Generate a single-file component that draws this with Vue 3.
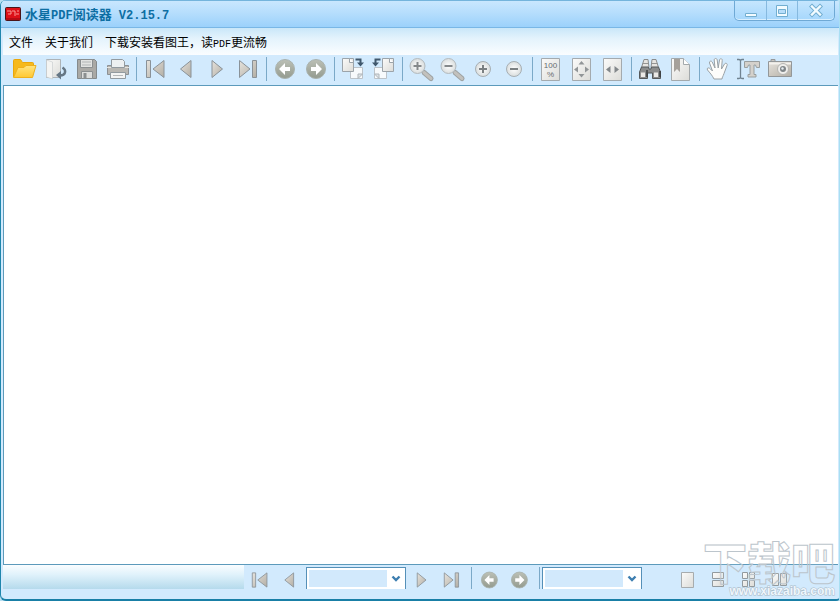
<script setup>
import { ref } from 'vue'

const page = ref('')
const zoom = ref('')

const first = '<path d="M7.500 5.500h4v17h-4zM25 5.500v17L14 14z" fill="url(#metal)" stroke="#8a9298"/>'
const prev = '<path d="M21 5.500v17L10.500 14z" fill="url(#metal)" stroke="#8a9298"/>'
const next = '<path d="M11 5.500v17L21.500 14z" fill="url(#metal)" stroke="#8a9298"/>'
const last = '<path d="M7.500 5.500v17L18 14zM20.500 5.500h4v17h-4z" fill="url(#metal)" stroke="#8a9298"/>'
const back = '<circle cx="16" cy="14" r="9.500" fill="url(#olive)" stroke="#a9b2ae"/><path d="M10 14l6-6v4h5v4h-5v4z" fill="#fff"/>'
const forward = '<circle cx="16" cy="14" r="9.500" fill="url(#olive)" stroke="#a9b2ae"/><path d="M22 14l-6-6v4h-5v4h5v4z" fill="#fff"/>'

const groups = [
  [
    ['打开', '<path d="M4.500 22V5.500q0-1 1-1h6l2 3h10q1 0 1 1V13" fill="#f6b91c" stroke="#e9a70c"/><path d="M4.500 22.500L9 12.500h6l2-2h10L23.500 22.500z" fill="url(#gold)" stroke="#eeb01d"/>'],
    ['导出', '<path d="M6.500 4.500h14v18h-14z" fill="url(#paper)" stroke="#adb3b7"/><path d="M6.500 5l6 2v17l-6-2z" fill="#f4f4f2" stroke="#c5c9cb" stroke-width=".6"/><path d="M22.500 12.500c4.500 3 3 8-2.500 8" fill="none" stroke="#667785" stroke-width="2.400"/><path d="M21 16v8.500l-5-4.500z" fill="#667785"/>'],
    ['保存', '<path d="M6.500 4.500h17l2 2v17h-19z" fill="#aaa9a5" stroke="#858a8c"/><path d="M9.500 4.500h12v8h-12z" fill="#e2e3e1" stroke="#8b8f90"/><path d="M11 7h9M11 10h9" stroke="#b2b5b5"/><path d="M10.500 16.500h11v7h-11z" fill="#dcdddb" stroke="#8b8f90"/><path d="M12.500 18h3v5h-3z" fill="#8b8f90"/>'],
    ['打印', '<path d="M5.500 10.500h21v9h-21z" fill="#b9b7b2" stroke="#8d9194"/><path d="M5 12.500h22" stroke="#e6e4df"/><path d="M9.500 4.500h11l2 2v6h-13z" fill="#edf0f1" stroke="#929a9f"/><path d="M8.500 17.500h15v6h-15z" fill="#f3f3f2" stroke="#929a9f"/><path d="M11 20.500h10" stroke="#b4b7b8"/>'],
  ],
  [['首页', first], ['上一页', prev], ['下一页', next], ['末页', last]],
  [['后退', back], ['前进', forward]],
  [
    ['向右旋转', '<path d="M13.500 12.500h12v11h-12z" fill="#f7fafc" stroke="#bcc3c9"/><path d="M21 23.500l4.500-4.500h-4.500z" fill="#dfe4e8" stroke="#aeb5ba"/><path d="M5.500 3.500h11v13h-11z" fill="url(#paper)" stroke="#9ca4aa"/><path d="M12.500 3.500v4h4" fill="#fff" stroke="#9ca4aa"/><path d="M18.500 4.500h5v4" fill="none" stroke="#40586d" stroke-width="2"/><path d="M20 7.500h7l-3.500 4z" fill="#40586d"/>'],
    ['向左旋转', '<path d="M6.500 12.500h12v11h-12z" fill="#f7fafc" stroke="#bcc3c9"/><path d="M11 23.500L6.500 19H11z" fill="#dfe4e8" stroke="#aeb5ba"/><path d="M14.500 3.500h11v13h-11z" fill="url(#paper)" stroke="#9ca4aa"/><path d="M21.500 3.500v4h4" fill="#fff" stroke="#9ca4aa"/><path d="M12.500 4.500h-5v4" fill="none" stroke="#40586d" stroke-width="2"/><path d="M4 7.500h7l-3.500 4z" fill="#40586d"/>'],
  ],
  [
    ['放大镜', '<path d="M19 17.500l7 6" stroke="#9ea2a3" stroke-width="5" stroke-linecap="round"/><path d="M19 17.500l7 6" stroke="#c2c1bd" stroke-width="3" stroke-linecap="round"/><circle cx="12.500" cy="11" r="7.500" fill="url(#lens)" stroke="#b3babe"/><path d="M8.500 11h8M12.500 7v8" stroke="#85898b" stroke-width="2"/>'],
    ['缩小镜', '<path d="M19 17.500l7 6" stroke="#9ea2a3" stroke-width="5" stroke-linecap="round"/><path d="M19 17.500l7 6" stroke="#c2c1bd" stroke-width="3" stroke-linecap="round"/><circle cx="12.500" cy="11" r="7.500" fill="url(#lens)" stroke="#b3babe"/><path d="M8.500 11h8" stroke="#85898b" stroke-width="2"/>'],
    ['放大', '<circle cx="16" cy="14" r="7.500" fill="url(#lens)" stroke="#a7afb4"/><path d="M12 14h8M16 10v8" stroke="#7b8082" stroke-width="2"/>'],
    ['缩小', '<circle cx="16" cy="14" r="7.500" fill="url(#lens)" stroke="#a7afb4"/><path d="M12 14h8" stroke="#7b8082" stroke-width="2"/>'],
  ],
  [
    ['实际大小', '<path d="M6.500 3.500h18v22h-18z" fill="url(#paper)" stroke="#a4aaae"/><text x="15.500" y="13" text-anchor="middle" font-family="Liberation Sans, sans-serif" font-size="8" fill="#666c70">100</text><text x="15.500" y="22" text-anchor="middle" font-family="Liberation Sans, sans-serif" font-size="8" fill="#666c70">%</text>'],
    ['适合页面', '<path d="M6.500 3.500h18v22h-18z" fill="url(#paper)" stroke="#a4aaae"/><path d="M15.500 6l3 3.500h-6zM15.500 22.500l3-3.500h-6zM8 14.500l4-3v6zM23 14.500l-4-3v6z" fill="#929698"/>'],
    ['适合宽度', '<path d="M6.500 3.500h18v22h-18z" fill="url(#paper)" stroke="#a4aaae"/><path d="M9 14.500l4.500-3.500v7zM22 14.500L17.500 11v7z" fill="#83888b"/>'],
  ],
  [
    ['查找', '<path d="M10 4.500h4l1 8H7.500zM18 4.500h4l2.500 8H17z" fill="#e6e4e1" stroke="#8b8c8c"/><path d="M8.500 8.500h6M17.500 8.500h6" stroke="#949594"/><path d="M7.500 12h7l.5 2h2l.5-2h7l2 5v6.500h-8V18h-5v5.500h-8V17z" fill="#8b8c8c" stroke="#55585a"/><path d="M7 17.500h4v4.500H7zM20 17.500h4v4.500h-4z" fill="#ebe9e6"/><path d="M13 15v7M26 16v6" stroke="#3a3c3e" stroke-width="1.500"/>'],
    ['书签', '<path d="M6.500 3.500h12l6 6v16h-18z" fill="url(#paper)" stroke="#a3a9ac"/><path d="M18.500 3.500v6h6" fill="#fff" stroke="#a3a9ac"/><path d="M9 4h6v13l-3-3-3 3z" fill="#a5a09a"/>'],
  ],
  [
    ['手形工具', '<path d="M12 24c-2-4-4-6-6.500-9-1-2 1-3 3-1l2 2L7.500 8c-.5-2 2-2.500 2.700-1l2.800 6-.8-8c0-2 2.800-2 3 0l1 8 1.300-8c.5-2 3-1.500 2.700.500L19.500 14l3-5c1-1.500 3.500-.5 2.500 1.500l-3 8c-1 3-2 4-2 5.500z" fill="#fdfdfb" stroke="#9aa1a5" stroke-linejoin="round"/>'],
    ['选择文本', '<path d="M4 4.500h2q1.500 0 1.500 1.500v16q0 1.500-1.500 1.500H4M11 4.500H9Q7.500 4.500 7.500 6v16q0 1.500 1.500 1.500h2" fill="none" stroke="#708391" stroke-width="1.300"/><path d="M11.500 6.500h15v6h-3l-1-2.500H21v9.500h2v2.500h-8v-2.500h2V10h-1.500l-1 2.500h-3z" fill="#d4d1cc" stroke="#999e9f"/>'],
    ['快照', '<path d="M7 6V4.500h4V6" fill="#c8c6c1" stroke="#969899"/><path d="M4.500 6.500h23v15h-23z" fill="url(#metal)" stroke="#939799"/><path d="M5 8.500h22" stroke="#f4f2ee" stroke-width="2"/><circle cx="19" cy="14" r="5.500" fill="#efeeeb" stroke="#b5b5b2"/><circle cx="19" cy="14" r="3" fill="#7f8588"/><circle cx="18.500" cy="13.500" r="1.200" fill="#e6edf1"/>'],
  ],
]

const pageNav = [['首页', first], ['上一页', prev]]
const pageNavEnd = [['下一页', next], ['末页', last]]
const history = [['后退', back], ['前进', forward]]
const layouts = [
  ['单页', '<path d="M9.500 6.500h12v15h-12z" fill="url(#paper)" stroke="#a7acae"/>'],
  ['连续', '<path d="M9.500 6.500h11v6h-11zM9.500 14.500h11v6h-11z" fill="url(#paper)" stroke="#929a9e"/>'],
  ['连续对开', '<path d="M8.500 6.500h5v6h-5zM15.500 6.500h5v6h-5zM8.500 14.500h5v6h-5zM15.500 14.500h5v6h-5z" fill="url(#paper)" stroke="#929a9e"/>'],
  ['对开', '<path d="M7.500 7.500h6v12h-6zM15.500 7.500h6v12h-6z" fill="url(#paper)" stroke="#929a9e"/>'],
]
</script>

<template>
  <div class="window">
    <svg class="defs" width="0" height="0" aria-hidden="true">
      <defs>
        <linearGradient id="metal" x1="0" y1="0" x2="1" y2="1"><stop offset="0" stop-color="#e6e3dd" /><stop offset="1" stop-color="#b3aea4" /></linearGradient>
        <linearGradient id="paper" x1="0" y1="0" x2="1" y2="1"><stop offset="0" stop-color="#fbfbfa" /><stop offset="1" stop-color="#dcdcd8" /></linearGradient>
        <linearGradient id="gold" x1="0" y1="0" x2="0" y2="1"><stop offset="0" stop-color="#ffe480" /><stop offset="1" stop-color="#ffc832" /></linearGradient>
        <linearGradient id="olive" x1="0" y1="0" x2="0" y2="1"><stop offset="0" stop-color="#bcc0b6" /><stop offset="1" stop-color="#949b8f" /></linearGradient>
        <radialGradient id="lens"><stop offset="0" stop-color="#fff" /><stop offset="1" stop-color="#d9dddd" /></radialGradient>
      </defs>
    </svg>

    <header class="titlebar">
      <svg class="logo" width="16" height="14" viewBox="0 0 16 14" aria-hidden="true">
        <rect x=".5" y=".5" width="15" height="13" rx="1" fill="#dc1018" stroke="#4a1519" />
        <path d="M2 4h4v3H3m4-3h3v5m2-5h2M11 7h3" fill="none" stroke="#fb9a94" />
        <path d="M1 12h14" stroke="#8e0910" />
      </svg>
      <h1>水星<span class="latin">PDF</span>阅读器<span class="latin"> V2.15.7</span></h1>
      <div class="controls">
        <button aria-label="最小化">
          <svg width="14" height="20" viewBox="0 0 14 20"><path d="M1.500 12.500h11v3h-11z" fill="#f2fbff" stroke="#72aed0" /></svg>
        </button>
        <button aria-label="最大化">
          <svg width="14" height="20" viewBox="0 0 14 20"><path d="M1.500 4.500h11v11h-11z" fill="#f2fbff" stroke="#72aed0" /><path d="M3.500 8.500h7v4h-7z" fill="#b8defa" stroke="#72aed0" /></svg>
        </button>
        <button aria-label="关闭">
          <svg width="14" height="20" viewBox="0 0 14 20"><path d="M3 5.500l8 8M11 5.500l-8 8" stroke="#72aed0" stroke-width="4.400" stroke-linecap="square" /><path d="M3 5.500l8 8M11 5.500l-8 8" stroke="#f2fbff" stroke-width="2.400" stroke-linecap="square" /></svg>
        </button>
      </div>
    </header>

    <nav class="menu">
      <button>文件</button>
      <button>关于我们</button>
      <button>下载安装看图王，读<span class="latin">PDF</span>更流畅</button>
    </nav>

    <div class="toolbar" role="toolbar">
      <div v-for="(group, i) in groups" :key="i" class="group">
        <button v-for="[name, art] in group" :key="name" class="tool" :aria-label="name">
          <svg width="31" height="28" viewBox="0 0 31 28" v-html="art" />
        </button>
      </div>
    </div>

    <main class="viewport"></main>

    <footer class="statusbar">
      <div class="message"></div>
      <div class="set">
        <button v-for="[name, art] in pageNav" :key="name" class="tool" :aria-label="name">
          <svg width="26" height="24" viewBox="0 0 31 28" v-html="art" />
        </button>
      </div>
      <label class="combo">
        <select v-model="page" aria-label="页码"><option value=""></option></select>
        <svg width="10" height="8" viewBox="0 0 10 8" aria-hidden="true"><path d="M1.500 1.500L5 5l3.500-3.500" fill="none" stroke="#3d7eb0" stroke-width="2.400" /></svg>
      </label>
      <div class="set">
        <button v-for="[name, art] in pageNavEnd" :key="name" class="tool" :aria-label="name">
          <svg width="26" height="24" viewBox="0 0 31 28" v-html="art" />
        </button>
      </div>
      <div class="set ruled">
        <button v-for="[name, art] in history" :key="name" class="tool" :aria-label="name">
          <svg width="26" height="24" viewBox="0 0 31 28" v-html="art" />
        </button>
      </div>
      <div class="ruled">
        <label class="combo">
          <select v-model="zoom" aria-label="缩放"><option value=""></option></select>
          <svg width="10" height="8" viewBox="0 0 10 8" aria-hidden="true"><path d="M1.500 1.500L5 5l3.500-3.500" fill="none" stroke="#3d7eb0" stroke-width="2.400" /></svg>
        </label>
      </div>
      <div class="layouts">
        <button v-for="[name, art] in layouts" :key="name" class="tool" :aria-label="name">
          <svg width="31" height="28" viewBox="0 0 31 28" v-html="art" />
        </button>
      </div>
    </footer>

    <div class="watermark">
      <span class="mark">下载吧</span>
      <span class="site">www.xiazaiba.com</span>
    </div>
  </div>
</template>

<style>
body {
  background: #b7dff2;
}
</style>

<style scoped>
.window {
  position: relative;
  display: flex;
  flex-direction: column;
  box-sizing: border-box;
  min-height: 100vh;
  padding: 0 1px 0 2px;
  border-left: 1px solid #1f86ac;
  border-right: 1px solid #a9dff2;
  border-bottom: 2px solid #197fa6;
  border-radius: 6px 4px 4px 6px;
  background: #d2eafd;
  font: 12px/16px "Noto Sans CJK SC", sans-serif;
  color: #000;
  overflow: hidden;
}
.defs {
  position: absolute;
}
button {
  margin: 0;
  padding: 0;
  border: 0;
  background: none;
  font: inherit;
  color: inherit;
}
svg {
  display: block;
}
.latin {
  font-family: "Liberation Mono", monospace;
  font-size: 10px;
  line-height: 1;
  white-space: pre;
}
.titlebar {
  display: flex;
  align-items: center;
  gap: 4px;
  height: 26px;
  margin: 0 -1px 0 -2px;
  padding: 0 4px;
  border-top: 1px solid #74b4dc;
  border-bottom: 1px solid #79b7e6;
  background: linear-gradient(#c9e7fe, #b6defd 45%, #9bd1fb);
}
h1 {
  flex: 1;
  margin: 0;
  font-size: 13px;
  line-height: 18px;
  color: #0d6ea3;
}
h1 .latin {
  font-size: 12px;
}
.controls {
  display: flex;
  align-self: flex-start;
  height: 19px;
  border: 1px solid #6fa9d5;
  border-top: 0;
  border-radius: 0 0 5px 5px;
  background: linear-gradient(#c5e6fe, #a6d7fc);
  box-shadow: inset 0 -1px #d9effe;
}
.controls button {
  display: grid;
  place-items: center;
  width: 31px;
}
.controls button + button {
  border-left: 1px solid #86b9df;
}
.controls button:last-child {
  width: 37px;
}
.menu {
  display: flex;
  align-items: center;
  gap: 12px;
  height: 27px;
  padding: 0 6px;
  background: linear-gradient(#c9e7f9, #e4f3fc 40%, #fafdff);
}
.toolbar {
  display: flex;
  height: 30px;
  padding-left: 6px;
}
.group {
  display: flex;
}
.group + .group,
.ruled {
  padding-left: 6px;
  background: linear-gradient(#7ba9c8, #7ba9c8) 3px 2px / 1px 24px no-repeat;
}
.tool {
  display: flex;
  justify-content: center;
  width: 31px;
}
.viewport {
  flex: 1;
  border: 1px solid #5c9abb;
  border-right: 0;
  background: #fff;
}
.statusbar {
  display: flex;
  align-items: flex-start;
  height: 34px;
}
.message {
  flex: 0 1 241px;
  height: 24px;
  background: linear-gradient(#fafdff, #e0f2fb 40%, #b5daec);
}
.set {
  display: flex;
  height: 24px;
  padding: 3px 2px 0 0;
  box-sizing: border-box;
}
.set .tool {
  width: 30px;
}
.statusbar .ruled {
  padding-left: 6px;
  background-size: 1px 22px;
}
.layouts {
  display: flex;
  padding-top: 1px;
  margin-left: 30px;
}
.combo {
  display: grid;
  align-items: center;
  box-sizing: border-box;
  width: 100px;
  height: 22px;
  margin-top: 2px;
  border: 1px solid #5590b8;
  border-bottom: 0;
  background: #fff;
}
.combo select {
  grid-area: 1 / 1;
  width: 78px;
  height: 17px;
  margin-left: 2px;
  padding: 0 4px;
  border: 0;
  border-radius: 0;
  appearance: none;
  background: #d2e9fc;
  font: inherit;
}
.combo svg {
  grid-area: 1 / 1;
  justify-self: end;
  margin-right: 4px;
  pointer-events: none;
}
.watermark {
  position: absolute;
  right: 4px;
  bottom: 2px;
  display: grid;
  justify-items: end;
  pointer-events: none;
}
.mark {
  font-size: 44px;
  line-height: 48px;
  font-weight: 900;
  color: rgb(255 255 255 / 10%);
  -webkit-text-stroke: 1px #bcc5cc;
}
.site {
  font: bold 12px/12px "Liberation Sans", sans-serif;
  color: #eef6fc;
  -webkit-text-stroke: 1px #a9b9c6;
  paint-order: stroke fill;
}
</style>
